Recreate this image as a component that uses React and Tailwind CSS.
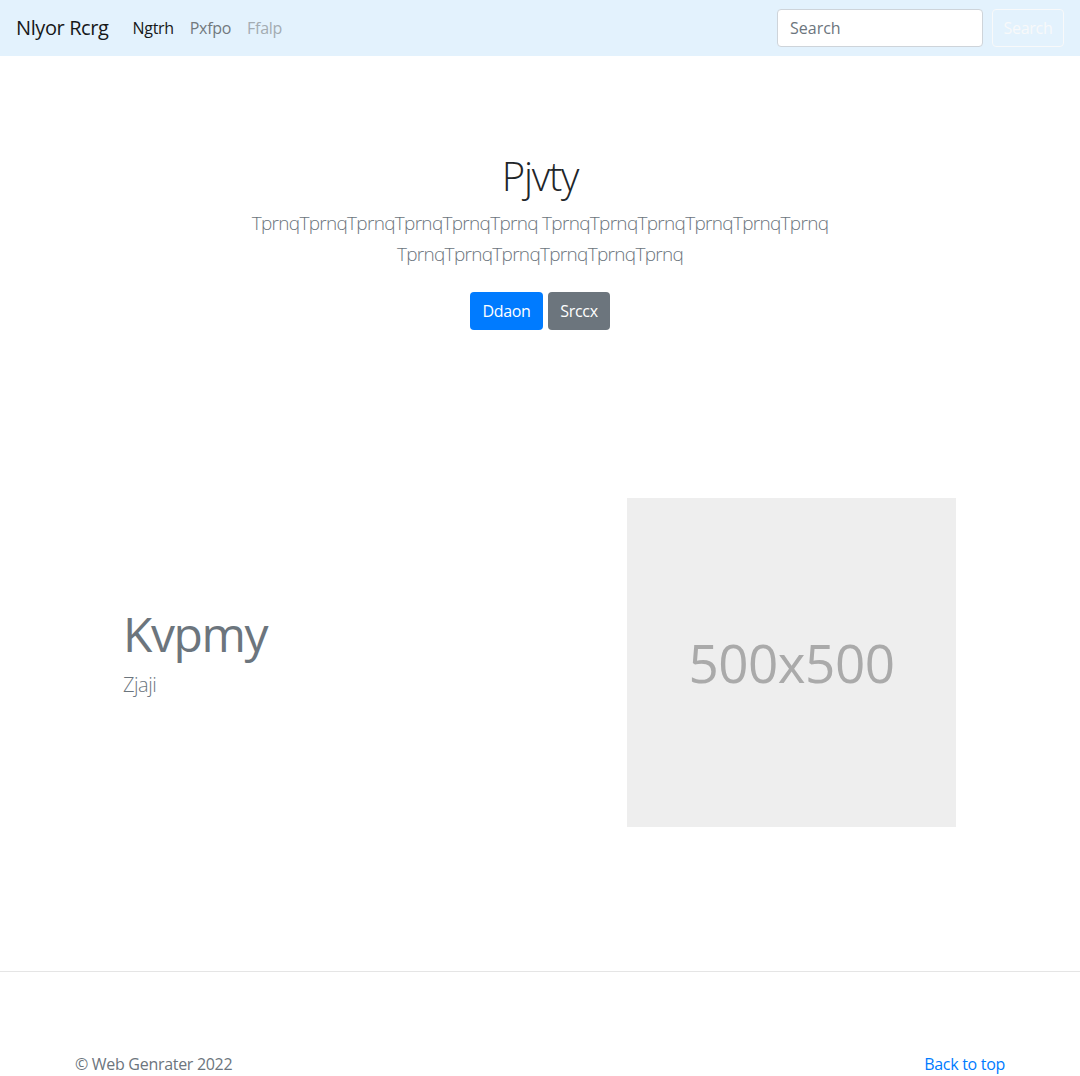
export default function App() {
  const font = { fontFamily: '"Open Sans", "Noto Sans", sans-serif' };
  return (
    <div className="bg-white min-h-[1076px] text-[#212529] text-[16px]" style={font}>
      <nav className="h-14 bg-[#e3f2fd] flex items-center px-4">
        <span className="text-[20px] leading-[30px] tracking-[-0.4px] text-[#171819] mr-4 py-[5px]">Nlyor Rcrg</span>
        <div className="flex items-center text-[16px] leading-6 tracking-[-0.3px]">
          <span className="px-2 text-[#171819]">Ngtrh</span>
          <span className="px-2 text-[#72797e]">Pxfpo</span>
          <span className="px-2 text-[#a3acb2]">Ffalp</span>
        </div>
        <div className="ml-auto flex items-center">
          <div className="w-[206px] h-[38px] bg-white border border-[#ced4da] rounded-[4px] flex items-center px-3 text-[#6c757d] mr-[9px]">
            Search
          </div>
          <div className="w-[72px] h-[38px] border border-[#f8f9fa] rounded-[4px] flex items-center justify-center text-[#f8f9fa] tracking-[-0.3px]">
            Search
          </div>
        </div>
      </nav>

      <section className="pt-24 pb-24 text-center">
        <h1 className="text-[40px] leading-[48px] font-light tracking-[-1.2px] text-[#212529] mb-2">Pjvty</h1>
        <p className="text-[19px] leading-[31px] font-light tracking-[-0.7px] text-[#6c757d] mx-auto max-w-[700px] mb-[22px]">
          TprnqTprnqTprnqTprnqTprnqTprnq TprnqTprnqTprnqTprnqTprnqTprnq TprnqTprnqTprnqTprnqTprnqTprnq
        </p>
        <div className="flex justify-center gap-[5px] my-2">
          <span className="w-[73px] h-[38px] rounded-[4px] bg-[#007bff] text-white flex items-center justify-center tracking-[-0.3px]">Ddaon</span>
          <span className="w-[62px] h-[38px] rounded-[4px] bg-[#6c757d] text-white flex items-center justify-center tracking-[-0.3px]">Srccx</span>
        </div>
      </section>

      <section className="mx-auto w-[930px] flex items-center mt-16">
        <div className="w-[552px] pl-12 pb-5">
          <h2 className="text-[48px] leading-[56px] font-normal tracking-[-1.4px] text-[#6c757d] mb-2">Kvpmy</h2>
          <p className="text-[20px] leading-[30px] font-light tracking-[-0.5px] text-[#6c757d]">Zjaji</p>
        </div>
        <div className="w-[329px] h-[329px] bg-[#eeeeee] flex items-center justify-center text-[53px] tracking-[-0.5px] text-[#aaaaaa]">
          500x500
        </div>
      </section>

      <hr className="mt-[144px] border-0 border-t border-[#e5e5e5]" />

      <footer className="mx-auto w-[930px] pt-[80px] flex justify-between text-[16px] leading-6 tracking-[-0.3px]">
        <span className="text-[#6c757d]">© Web Genrater 2022</span>
        <span className="text-[#007bff]">Back to top</span>
      </footer>
    </div>
  );
}
